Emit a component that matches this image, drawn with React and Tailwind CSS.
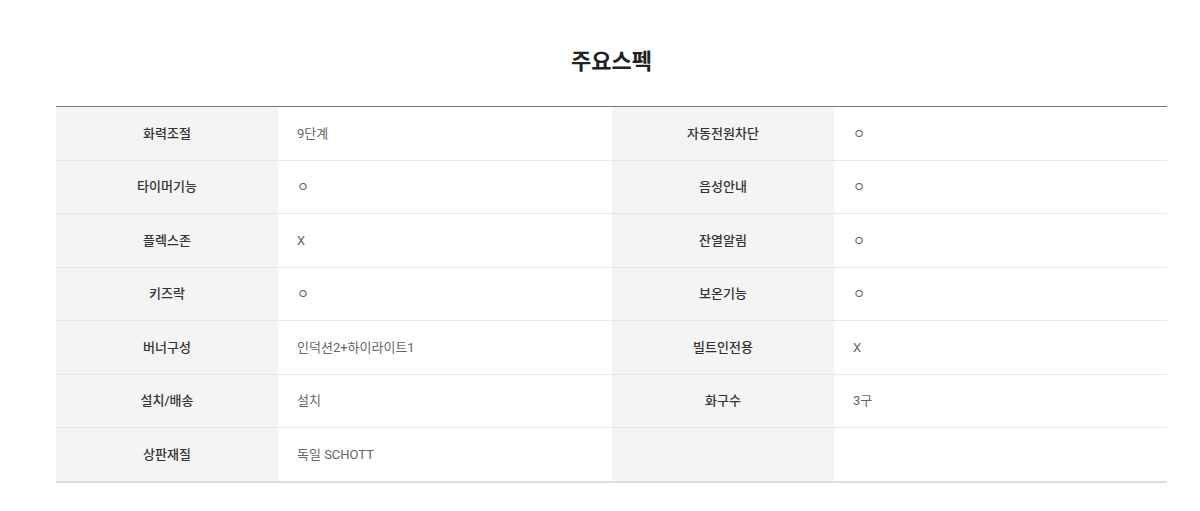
const specs = [
  ['화력조절', '9단계', '자동전원차단', 'ㅇ'],
  ['타이머기능', 'ㅇ', '음성안내', 'ㅇ'],
  ['플렉스존', 'X', '잔열알림', 'ㅇ'],
  ['키즈락', 'ㅇ', '보온기능', 'ㅇ'],
  ['버너구성', '인덕션2+하이라이트1', '빌트인전용', 'X'],
  ['설치/배송', '설치', '화구수', '3구'],
  ['상판재질', '독일 SCHOTT', '', ''],
]

const font = { fontFamily: 'Roboto, "Noto Sans CJK KR", sans-serif' }

const Label = ({ children }) => (
  <div className="flex items-center justify-center bg-[#f4f4f4] text-[13px] font-medium text-[#333]">
    {children}
  </div>
)

const Value = ({ children }) => (
  <div className="flex items-center pl-[19px] text-[13px] text-[#666]">
    {children}
  </div>
)

const App = () => {
  return (
    <div className="min-h-screen bg-white pl-[56px] pr-[33px] pt-[44px]" style={font}>
      <h2 className="text-center text-[22px] font-bold leading-[36px] text-[#222]">
        주요스펙
      </h2>
      <div className="mt-[26px] border-t border-[#777]">
        {specs.map((row, i) => (
          <div
            key={i}
            className={`grid grid-cols-[222fr_334fr_222fr_333fr] ${
              i === specs.length - 1
                ? 'h-[54.5px] border-b-2 border-[#dcdcdc]'
                : 'h-[53.5px] border-b border-[#e8e8e8]'
            }`}
          >
            <Label>{row[0]}</Label>
            <Value>{row[1]}</Value>
            <Label>{row[2]}</Label>
            <Value>{row[3]}</Value>
          </div>
        ))}
      </div>
    </div>
  )
}

export default App
